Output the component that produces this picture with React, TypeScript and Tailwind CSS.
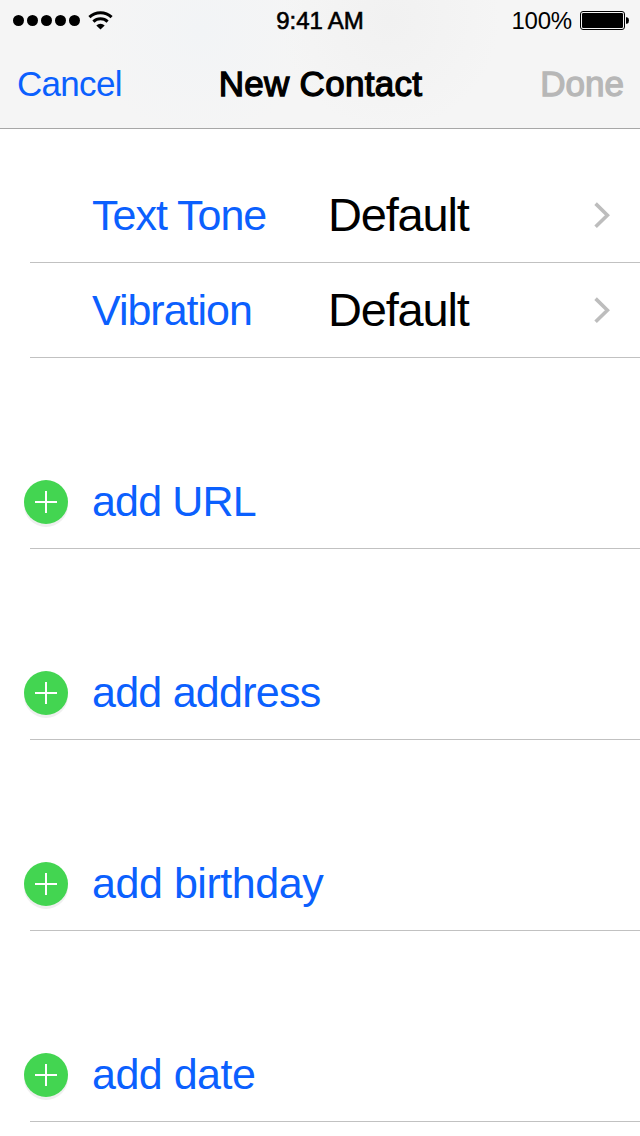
function StatusBar() {
  return (
    <div className="grid h-10 grid-cols-3 items-center text-[24px] leading-8 text-black">
      <div className="flex items-center gap-[3px] pt-px pl-[13px]">
        {[0, 1, 2, 3, 4].map((dot) => (
          <span key={dot} className="size-[11px] rounded-full bg-black" />
        ))}
        <svg className="ml-[5px]" width="25" height="19" viewBox="0 0 25 19" fill="none" stroke="#000">
          <path d="M1.4 6.2 A16.2 16.2 0 0 1 23.6 6.2" strokeWidth="3" />
          <path d="M5.4 10.6 A10.3 10.3 0 0 1 19.6 10.6" strokeWidth="3" />
          <path d="M8.3 14.4 A6.2 6.2 0 0 1 16.7 14.4 L12.5 18.6 Z" fill="#000" stroke="none" />
        </svg>
      </div>
      <div className="pt-0.5 text-center tracking-[-0.1px] [-webkit-text-stroke:0.6px_#000]">9:41 AM</div>
      <div className="flex items-center justify-end gap-2 pr-[11px]">
        <span className="pt-0.5 tracking-[-0.2px]">100%</span>
        <svg width="49" height="19" viewBox="0 0 49 19">
          <rect x="0.5" y="0.5" width="44" height="18" rx="2.5" fill="none" stroke="#000" />
          <rect x="2" y="2" width="41" height="15" rx="1.2" fill="#000" />
          <path d="M46 6.2 H47 Q49 6.8 49 9.5 Q49 12.2 47 12.8 H46 Z" fill="#000" />
        </svg>
      </div>
    </div>
  );
}

function NavBar() {
  return (
    <nav className="grid h-[88px] grid-cols-[1fr_auto_1fr] items-center text-[35px] leading-[88px]">
      <button className="pl-[17px] text-left tracking-[-0.7px] text-[#0b60fe]">Cancel</button>
      <h1 className="pl-px tracking-[0.3px] text-black [-webkit-text-stroke:1.3px_#000]">New Contact</h1>
      <button className="pr-4 text-right text-[#b7b7b7] [-webkit-text-stroke:1.3px_#b7b7b7]">Done</button>
    </nav>
  );
}

function ToneRow({ label, value }: { label: string; value: string }) {
  return (
    <div className="ml-[30px] flex h-[95px] items-center border-b border-[#c1c1c1] pr-[29px] pl-[62px]">
      <span className="w-[236px] text-[43px] leading-none tracking-[-1px] text-[#0b60fe]">{label}</span>
      <span className="flex-1 pb-0.5 text-[47px] leading-none tracking-[-1.2px] text-black">{value}</span>
      <svg width="17" height="28" viewBox="0 0 17 28" fill="none" stroke="#bdbdbd" strokeWidth="3.6">
        <path d="M1.6 2.6 L13.4 14.2 L1.6 25.8" />
      </svg>
    </div>
  );
}

function AddRow({ label, tracking = "tracking-[-0.75px]" }: { label: string; tracking?: string }) {
  return (
    <div className="mt-24 h-[95px] pl-6">
      <div className="flex h-[94px] items-center gap-6">
        <svg className="mt-0.5 overflow-visible" width="44" height="44" viewBox="0 0 44 44">
          <circle cx="22" cy="25" r="22" fill="#efefef" />
          <circle cx="22" cy="22" r="22" fill="#43d551" />
          <path d="M11 22 H33 M22 11 V33" stroke="#fff" strokeWidth="2" />
        </svg>
        <span className={`text-[43px] leading-none text-[#0b60fe] ${tracking}`}>{label}</span>
      </div>
      <div className="ml-1.5 h-px bg-[#c1c1c1]" />
    </div>
  );
}

export default function App() {
  return (
    <div className="flex h-[1136px] w-[640px] flex-col overflow-hidden bg-white font-['Liberation_Sans',Arial,sans-serif]">
      <header className="h-[129px] border-b border-[#a7a7a7] bg-[#f5f5f5] bg-[radial-gradient(circle_at_200px_30px,#f2f4f6_0,transparent_110px),radial-gradient(circle_at_390px_20px,#f1f1f1_0,transparent_110px)]">
        <StatusBar />
        <NavBar />
      </header>
      <main className="pt-[39px]">
        <ToneRow label="Text Tone" value="Default" />
        <ToneRow label="Vibration" value="Default" />
        <AddRow label="add URL" tracking="tracking-[-0.85px]" />
        <AddRow label="add address" />
        <AddRow label="add birthday" tracking="tracking-[-0.45px]" />
        <AddRow label="add date" tracking="tracking-[-0.5px]" />
      </main>
    </div>
  );
}
